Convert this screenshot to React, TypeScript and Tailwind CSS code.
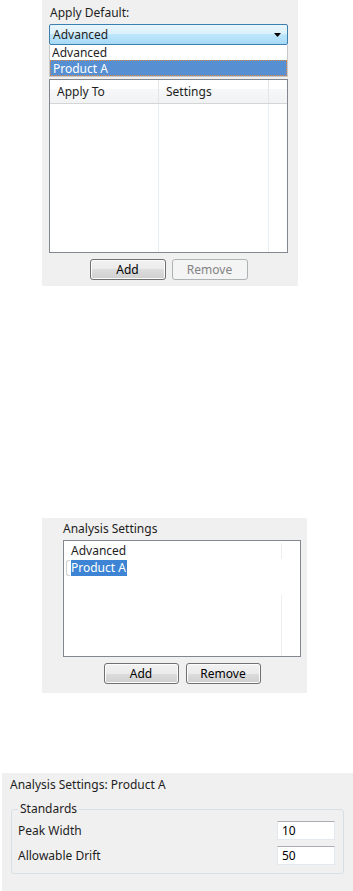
import React from "react";

function WinButton({ label, disabled, w }: { label: string; disabled?: boolean; w: string }) {
  return (
    <div
      className={
        disabled
          ? `h-[21px] ${w} rounded-[3px] border border-[#adb2b5] bg-[#f4f4f4] flex items-center justify-center text-[#838383]`
          : `h-[21px] ${w} rounded-[3px] border border-[#707070] bg-[linear-gradient(to_bottom,#f2f2f2_0%,#ebebeb_50%,#dddddd_50%,#cfcfcf_100%)] shadow-[inset_0_0_0_1px_#fcfcfc] flex items-center justify-center text-[#000]`
      }
    >
      {label}
    </div>
  );
}

export default function App() {
  return (
    <div className="w-[353px] h-[891px] bg-white text-[12px] leading-[16px] text-[#1e1e1e] font-['Segoe_UI','Noto_Sans',sans-serif] flex flex-col">
      {/* Panel 1 */}
      <div className="ml-[42px] w-[256px] h-[286px] bg-[#f0f0f0] pl-[7px] pt-[5px] flex flex-col">
        <div className="h-[16px] pl-[1px]">Apply Default:</div>
        <div className="mt-[3px] w-[239px] h-[21px] border border-[#3c7fb1] rounded-[2px] bg-[linear-gradient(to_bottom,#eaf6fd_0%,#d9f0fc_50%,#bee6fd_50%,#a7d9f5_100%)] flex items-center pl-[3px] pr-[5px]">
          <span className="flex-1">Advanced</span>
          <svg width="7" height="4" viewBox="0 0 7 4" className="mr-[1px]">
            <path d="M0 0H7L3.5 4Z" fill="#000" />
          </svg>
        </div>
        <div className="w-[239px] h-[32px] bg-white border-x border-b border-[#c8c8c8] flex flex-col">
          <div className="h-[15px] pl-[2px] leading-[15px]">Advanced</div>
          <div className="h-[16px] pl-[2px] leading-[15px] bg-[#5690d2] text-white border border-dotted border-[#e2863f]">
            Product A
          </div>
        </div>
        <div className="mt-[2px] w-[239px] h-[174px] bg-white border border-[#828790] flex flex-col">
          <div className="h-[24px] flex bg-[linear-gradient(to_bottom,#ffffff_0%,#ffffff_40%,#f7f8fa_41%,#f1f2f4_100%)] border-b border-[#d5d5d5] items-center">
            <div className="w-[109px] h-full pl-[7px] flex items-center border-r border-[#e5e5e5]">Apply To</div>
            <div className="w-[110px] h-full pl-[7px] flex items-center border-r border-[#e5e5e5]">Settings</div>
            <div className="flex-1" />
          </div>
          <div className="flex-1 flex">
            <div className="w-[109px] border-r border-[#e8eef6]" />
            <div className="w-[110px] border-r border-[#e8eef6]" />
            <div className="flex-1" />
          </div>
        </div>
        <div className="mt-[6px] w-[239px] flex justify-center gap-[6px]">
          <WinButton label="Add" w="w-[76px]" />
          <WinButton label="Remove" w="w-[76px]" disabled />
        </div>
      </div>

      {/* Panel 2 */}
      <div className="mt-[232px] ml-[42px] w-[265px] h-[175px] bg-[#f0f0f0] pl-[21px] pt-[3px] flex flex-col">
        <div className="h-[16px] leading-[16px]">Analysis Settings</div>
        <div className="mt-[3px] w-[238px] h-[117px] bg-white border border-[#828790] flex">
          <div className="flex-1 pt-[2px] pl-[2px] flex flex-col">
            <div className="h-[16px] pl-[5px] leading-[16px]">Advanced</div>
            <div className="h-[17px] flex items-center">
              <div className="w-[4px] h-[16px] border-l border-y border-[#d0d0d0] rounded-l-[3px]" />
              <span className="ml-[1px] bg-[#3d85d4] text-white leading-[16px] pr-[1px]">Product A</span>
            </div>
          </div>
          <div className="w-[19px] flex flex-col">
            <div className="h-[16px] border-l border-[#eeeeee] mt-[2px]" />
            <div className="h-[36px]" />
            <div className="flex-1 border-l border-[#eeeeee]" />
          </div>
        </div>
        <div className="mt-[6px] w-[238px] flex justify-center gap-[7px]">
          <WinButton label="Add" w="w-[75px]" />
          <WinButton label="Remove" w="w-[75px]" />
        </div>
      </div>

      {/* Panel 3 */}
      <div className="mt-[80px] ml-[2px] w-[351px] h-[118px] bg-[#f0f0f0] pl-[8px] pt-[4px] flex flex-col">
        <div className="h-[16px] leading-[16px]">Analysis Settings: Product A</div>
        <div className="relative mt-[16px] ml-[1px] w-[333px] h-[65px] border border-[#d5dfe5] rounded-[3px] pl-[6px] pr-[8px] pt-[11px] flex flex-col">
          <div className="absolute left-[6px] top-[-9px] px-[2px] bg-[#f0f0f0] leading-[16px]">Standards</div>
          <div className="flex items-center h-[19px]">
            <span className="flex-1">Peak Width</span>
            <div className="w-[58px] h-[19px] bg-white border border-[#e3e9ef] border-t-[#abadb3] pl-[4px] leading-[17px] text-black">10</div>
          </div>
          <div className="mt-[6px] flex items-center h-[19px]">
            <span className="flex-1">Allowable Drift</span>
            <div className="w-[58px] h-[19px] bg-white border border-[#e3e9ef] border-t-[#abadb3] pl-[4px] leading-[17px] text-black">50</div>
          </div>
        </div>
      </div>
    </div>
  );
}
